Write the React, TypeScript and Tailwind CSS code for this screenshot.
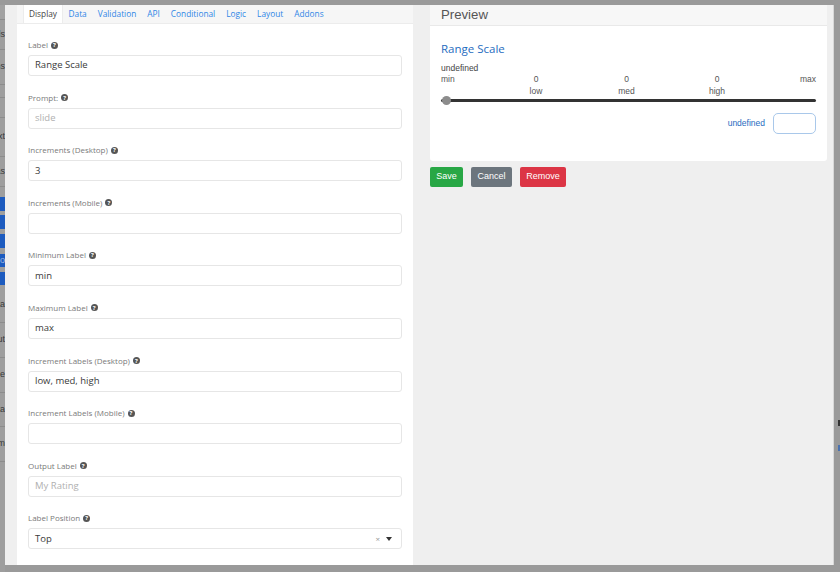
import React from "react";

const POP = { fontFamily: '"Open Sans", "Noto Sans", sans-serif' } as React.CSSProperties;
const ARI = { fontFamily: '"Liberation Sans", Arial, sans-serif' } as React.CSSProperties;

function Help() {
  return (
    <span className="ml-[3px] inline-flex h-[7px] w-[7px] items-center justify-center rounded-full bg-[#555] text-[6px] font-bold leading-none text-white">
      ?
    </span>
  );
}

function Field({
  label,
  value,
  placeholder,
  help = true,
  select = false,
}: {
  label: string;
  value?: string;
  placeholder?: string;
  help?: boolean;
  select?: boolean;
}) {
  return (
    <div className="mb-[16.6px]">
      <div className="mb-[5px] flex h-[10px] items-center text-[8px] leading-[10px] text-[#7a7a7a]">
        <span>{label}</span>
        {help && <Help />}
      </div>
      <div className="flex h-[21px] items-center rounded-[3px] border border-[#e6e6e6] bg-white pl-[6px] pr-[9px] text-[9.5px]">
        {value ? (
          <span className="text-[#3a3a3a]">{value}</span>
        ) : (
          <span className="text-[#b0b0b0]">{placeholder ?? ""}</span>
        )}
        {select && (
          <div className="ml-auto flex items-center gap-[6px]">
            <span className="text-[8px] leading-none text-[#999]">×</span>
            <svg width="6" height="4" viewBox="0 0 6 4">
              <path d="M0 0 L6 0 L3 4 Z" fill="#333" />
            </svg>
          </div>
        )}
      </div>
    </div>
  );
}

function Row({ h, text }: { h: string; text: string }) {
  return (
    <div
      className={
        "flex items-center justify-end overflow-hidden whitespace-nowrap border-b border-[#8c8c8c] text-[9px] text-[#3a3a3a] " + h
      }
    >
      {text}
    </div>
  );
}

function Blue({ h, text }: { h: string; text: string }) {
  return (
    <div className={"flex items-center justify-end overflow-hidden whitespace-nowrap bg-[#1d5bbf] text-[9px] text-[#9fb8e0] " + h}>
      {text}
    </div>
  );
}

function LeftStrip() {
  return (
    <div className="flex h-full w-[5px] shrink-0 flex-col bg-[#9e9e9e]" style={ARI}>
      <div className="h-[5px] bg-[#9a9a9a]" />
      <div className="h-[15px] border-b border-[#8c8c8c] bg-[#a2a2a2]" />
      <Row h="h-[30px]" text="Fields" />
      <Row h="h-[35px]" text="Options" />
      <Row h="h-[13px]" text="" />
      <Row h="h-[20px]" text="" />
      <Row h="h-[39px]" text="Text" />
      <Row h="h-[30px]" text="Areas" />
      <div className="h-[10px]" />
      <Blue h="h-[14px]" text="" />
      <div className="h-[4px]" />
      <Blue h="h-[14px]" text="" />
      <div className="h-[5px]" />
      <Blue h="h-[14px]" text="" />
      <div className="h-[6px]" />
      <Blue h="h-[13px]" text="co" />
      <div className="h-[5px]" />
      <Blue h="h-[13px]" text="" />
      <div className="h-[3px]" />
      <Row h="h-[35px]" text="Data" />
      <Row h="h-[35px]" text="Layout" />
      <Row h="h-[35px]" text="Advance" />
      <Row h="h-[34px]" text="Data" />
      <Row h="h-[35px]" text="Premium" />
      <div className="flex-1" />
    </div>
  );
}

function Tabs() {
  const tabs = ["Display", "Data", "Validation", "API", "Conditional", "Logic", "Layout", "Addons"];
  return (
    <div className="flex h-[19px] shrink-0 items-stretch border-b border-[#ececec] bg-[#f6f6f6] pl-[6px]">
      {tabs.map((t, i) => (
        <div
          key={t}
          className={
            i === 0
              ? "flex items-center border-x border-[#ececec] bg-white px-[5px] text-[8.3px] text-[#444]"
              : "flex items-center px-[5.5px] text-[8.3px] text-[#2f86e6]"
          }
        >
          {t}
        </div>
      ))}
    </div>
  );
}

function Preview() {
  return (
    <div className="flex w-[397px] flex-col">
      <div className="flex flex-col overflow-hidden rounded-b-[3px] bg-white">
        <div className="flex h-[21px] items-center border-b border-[#e9e9e9] bg-[#f7f7f7] px-[11px] text-[13.2px] text-[#555]" style={ARI}>
          Preview
        </div>
        <div className="flex h-[135px] flex-col px-[11px] pt-[15px]">
          <div className="h-[15px] text-[11.5px] leading-[15px] text-[#1f6cc0]" style={POP}>
            Range Scale
          </div>
          <div style={ARI} className="text-[8.5px] text-[#444]">
            <div className="mt-[7px] h-[10px] leading-[10px]">undefined</div>
            <div className="mt-[1px] grid h-[10px] grid-cols-[50px_90px_91px_90px_1fr] leading-[10px] text-[#555]">
              <span>min</span>
              <span className="text-center">0</span>
              <span className="text-center">0</span>
              <span className="text-center">0</span>
              <span className="text-right">max</span>
            </div>
            <div className="mt-[2px] grid h-[10px] grid-cols-[50px_90px_91px_90px_1fr] leading-[10px] text-[#555]">
              <span></span>
              <span className="text-center">low</span>
              <span className="text-center">med</span>
              <span className="text-center">high</span>
              <span></span>
            </div>
          </div>
          <div className="relative flex h-[9px] items-center">
            <div className="h-[3px] w-full rounded-full bg-[#333]" />
            <div className="absolute left-[1px] top-0 h-[9px] w-[9px] rounded-full bg-[#8c8c8c]" />
          </div>
          <div className="mt-[8px] flex items-center justify-end gap-[8px]">
            <span className="text-[8.5px] text-[#1f6cc0]" style={ARI}>undefined</span>
            <div className="h-[21px] w-[43px] rounded-[5px] border border-[#a9c8ea] bg-white" />
          </div>
        </div>
      </div>
      <div className="mt-[6px] flex gap-[8px] text-[9px] text-white" style={ARI}>
        <div className="flex h-[20px] w-[33px] items-center justify-center rounded-[2px] bg-[#28a745]">Save</div>
        <div className="flex h-[20px] w-[41px] items-center justify-center rounded-[2px] bg-[#6c757d]">Cancel</div>
        <div className="flex h-[20px] w-[46px] items-center justify-center rounded-[2px] bg-[#dc3545]">Remove</div>
      </div>
    </div>
  );
}

export default function App() {
  return (
    <div className="flex h-[572px] w-[840px] overflow-hidden bg-[#9a9a9a]">
      <LeftStrip />
      <div className="mt-[5px] flex h-[560px] w-[829px] shrink-0 gap-[17px] border-r border-[#d8d8d8] bg-[#efefef] pl-[12px]" style={POP}>
        <div className="flex w-[396px] flex-col bg-white">
          <Tabs />
          <div className="flex flex-col px-[11px] pt-[16px]">
            <Field label="Label" value="Range Scale" />
            <Field label="Prompt:" placeholder="slide" />
            <Field label="Increments (Desktop)" value="3" />
            <Field label="Increments (Mobile)" />
            <Field label="Minimum Label" value="min" />
            <Field label="Maximum Label" value="max" />
            <Field label="Increment Labels (Desktop)" value="low, med, high" />
            <Field label="Increment Labels (Mobile)" />
            <Field label="Output Label" placeholder="My Rating" />
            <Field label="Label Position" value="Top" select />
          </div>
        </div>
        <Preview />
      </div>
      <div className="flex flex-1 flex-col bg-[#9a9a9a]">
        <div className="h-[420px]" />
        <div className="ml-auto h-[6px] w-[2px] bg-[#333]" />
        <div className="h-[19px]" />
        <div className="ml-auto h-[6px] w-[2px] bg-[#4a72b0]" />
      </div>
    </div>
  );
}
